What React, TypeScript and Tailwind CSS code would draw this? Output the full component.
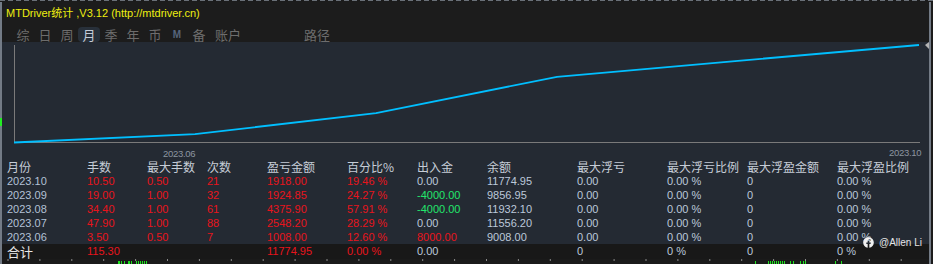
import { FaFacebook } from "react-icons/fa";

type Row = {
  month: string;
  lots: string;
  maxLots: string;
  count: string;
  pnl: string;
  pct: string;
  inout: string;
  inoutColor: string;
  balance: string;
};

const rows: Row[] = [
  { month: "2023.10", lots: "10.50", maxLots: "0.50", count: "21", pnl: "1918.00", pct: "19.46 %", inout: "0.00", inoutColor: "text-[#bcc8da]", balance: "11774.95" },
  { month: "2023.09", lots: "19.00", maxLots: "1.00", count: "32", pnl: "1924.85", pct: "24.27 %", inout: "-4000.00", inoutColor: "text-[#22e56c]", balance: "9856.95" },
  { month: "2023.08", lots: "34.40", maxLots: "1.00", count: "61", pnl: "4375.90", pct: "57.91 %", inout: "-4000.00", inoutColor: "text-[#22e56c]", balance: "11932.10" },
  { month: "2023.07", lots: "47.90", maxLots: "1.00", count: "88", pnl: "2548.20", pct: "28.29 %", inout: "0.00", inoutColor: "text-[#bcc8da]", balance: "11556.20" },
  { month: "2023.06", lots: "3.50", maxLots: "0.50", count: "7", pnl: "1008.00", pct: "12.60 %", inout: "8000.00", inoutColor: "text-[#e8141c]", balance: "9008.00" },
];

const headers = ["月份", "手数", "最大手数", "次数", "盈亏金额", "百分比%", "出入金", "余额", "最大浮亏", "最大浮亏比例", "最大浮盈金额", "最大浮盈比例"];

const tabs = ["综", "日", "周", "月", "季", "年", "币"];

const grid = "grid grid-cols-[80px_60px_60px_60px_80px_70px_70px_90px_90px_80px_90px_1fr] pl-[5px]";

// cumulative profit per month end, page x = svg x + 2
const cum = [0, 1008, 3556.2, 7932.1, 9856.95, 11774.95];
const points = cum.map((v, i) => `${12 + i * 181},${100.5 - (97.5 * v) / 11774.95}`).join(" ");

const ticks = Array.from({ length: 29 }, (_, i) => 6 + i * 31.9);
const greens: [number, number][] = [
  [118, 2], [121, 1], [124, 1], [128, 2], [131, 1], [136, 1], [138, 1], [140, 1], [142, 1], [144, 1], [146, 1],
  [755, 1], [768, 1], [770, 1], [772, 1], [774, 1], [776, 1], [778, 1], [780, 1], [782, 1], [784, 1],
  [790, 1], [793, 1], [800, 1], [803, 1], [805, 1], [835, 1], [841, 1],
];

export default function App() {
  return (
    <div className="relative w-[933px] h-[264px] bg-[#1b1b1b] overflow-hidden font-['Liberation_Sans','Noto_Sans_CJK_SC',sans-serif]">
      <svg width="933" height="2" className="block">
        <line x1="0" y1="0.5" x2="933" y2="0.5" stroke="#6a7078" strokeDasharray="5 3" />
      </svg>

      <div className="w-[931px] h-[262px] flex flex-col border-l-2 border-r-2 border-[#737b86]">
        {/* header */}
        <div className="h-[41px] bg-[#1c1c1c] flex flex-col">
          <div className="h-[20px] pt-[2px] pl-[4px] flex items-center text-[11px] text-[#eeee10] leading-none whitespace-nowrap">
            MTDriver统计 ,V3.12 (http://mtdriver.cn)
          </div>
          <div className="flex items-center pl-[10px] mt-[5px] h-[15px] text-[13px] leading-none text-[#6d6d6d] font-['Noto_Sans_CJK_SC',sans-serif]">
            {tabs.map((t) => (
              <div
                key={t}
                className={`w-[22px] h-[15px] flex items-center justify-center rounded-sm ${
                  t === "月" ? "bg-[#28303a] text-[#c4ccd8]" : ""
                }`}
              >
                {t}
              </div>
            ))}
            <div className="w-[22px] flex items-center justify-center text-[10px] font-bold text-[#56657b] font-['Liberation_Sans',sans-serif]">M</div>
            <div className="w-[22px] flex items-center justify-center">备</div>
            <div className="w-[36px] flex items-center justify-center">账户</div>
            <div className="ml-[58px]">路径</div>
          </div>
        </div>

        {/* chart */}
        <div className="h-[118px] bg-[#242a33]">
          <svg width="927" height="118" className="block">
            <line x1="12.5" y1="3" x2="12.5" y2="101" stroke="#7a7a7a" />
            <line x1="12" y1="100.5" x2="918" y2="100.5" stroke="#7a7a7a" />
            <polyline points={points} fill="none" stroke="#00bfff" strokeWidth="1.8" />
            <text x="161" y="115" fontSize="9.5" fill="#8c95a0" letterSpacing="-0.3" fontFamily="Liberation Sans">2023.06</text>
            <text x="887" y="114" fontSize="9.5" fill="#8c95a0" letterSpacing="-0.3" fontFamily="Liberation Sans">2023.10</text>
            <polygon points="923,3 927,0 927,7" fill="#b4b4b4" />
          </svg>
        </div>

        {/* table */}
        <div className="bg-[#242a33] flex flex-col">
          <div className={`${grid} h-[14px] items-center text-[12px] leading-none text-[#c6cdd7] font-['Noto_Sans_CJK_SC',sans-serif] whitespace-nowrap`}>
            {headers.map((h) => (
              <div key={h}>{h}</div>
            ))}
          </div>
          {rows.map((r) => (
            <div key={r.month} className={`${grid} h-[14px] items-center text-[11px] leading-none whitespace-nowrap`}>
              <div className="text-[#b3c1d6]">{r.month}</div>
              <div className="text-[#e8141c]">{r.lots}</div>
              <div className="text-[#e8141c]">{r.maxLots}</div>
              <div className="text-[#e8141c]">{r.count}</div>
              <div className="text-[#e8141c]">{r.pnl}</div>
              <div className="text-[#e8141c]">{r.pct}</div>
              <div className={r.inoutColor}>{r.inout}</div>
              <div className="text-[#bcc8da]">{r.balance}</div>
              <div className="text-[#bcc8da]">0.00</div>
              <div className="text-[#bcc8da]">0.00 %</div>
              <div className="text-[#bcc8da]">0</div>
              <div className="text-[#bcc8da]">0.00 %</div>
            </div>
          ))}
        </div>
        <div className={`${grid} h-[15px] items-center bg-[#181818] text-[11px] leading-none whitespace-nowrap`}>
          <div className="text-[13px] text-[#e6e6e6] font-['Noto_Sans_CJK_SC',sans-serif]">合计</div>
          <div className="text-[#e8141c]">115.30</div>
          <div />
          <div />
          <div className="text-[#e8141c]">11774.95</div>
          <div className="text-[#e8141c]">0.00 %</div>
          <div className="text-[#bcc8da]">0.00</div>
          <div />
          <div className="text-[#bcc8da]">0</div>
          <div className="text-[#bcc8da]">0 %</div>
          <div className="text-[#bcc8da]">0</div>
          <div className="text-[#bcc8da]">0 %</div>
        </div>
        <svg width="927" height="5" className="block bg-[#1a1a1a]">
          {ticks.map((x) => (
            <line key={x} x1={x} y1="0" x2={x} y2="2" stroke="#8a8a8a" />
          ))}
          {greens.map(([x, w]) => (
            <rect key={x} x={x - 2} y="2" width={w} height="3" fill="#1fe01f" />
          ))}
        </svg>
      </div>

      {/* left marker */}
      <div className="absolute left-0 top-[118px] w-[2px] h-[8px] bg-[#22ee22]" />

      {/* watermark */}
      <div className="absolute left-[863px] top-[237px] flex items-center gap-[5px] text-[10px] leading-none text-[#e4e4e4]">
        <FaFacebook className="w-[11px] h-[11px] text-[#f0f0f0]" />
        <span>@Allen Li</span>
      </div>
    </div>
  );
}
